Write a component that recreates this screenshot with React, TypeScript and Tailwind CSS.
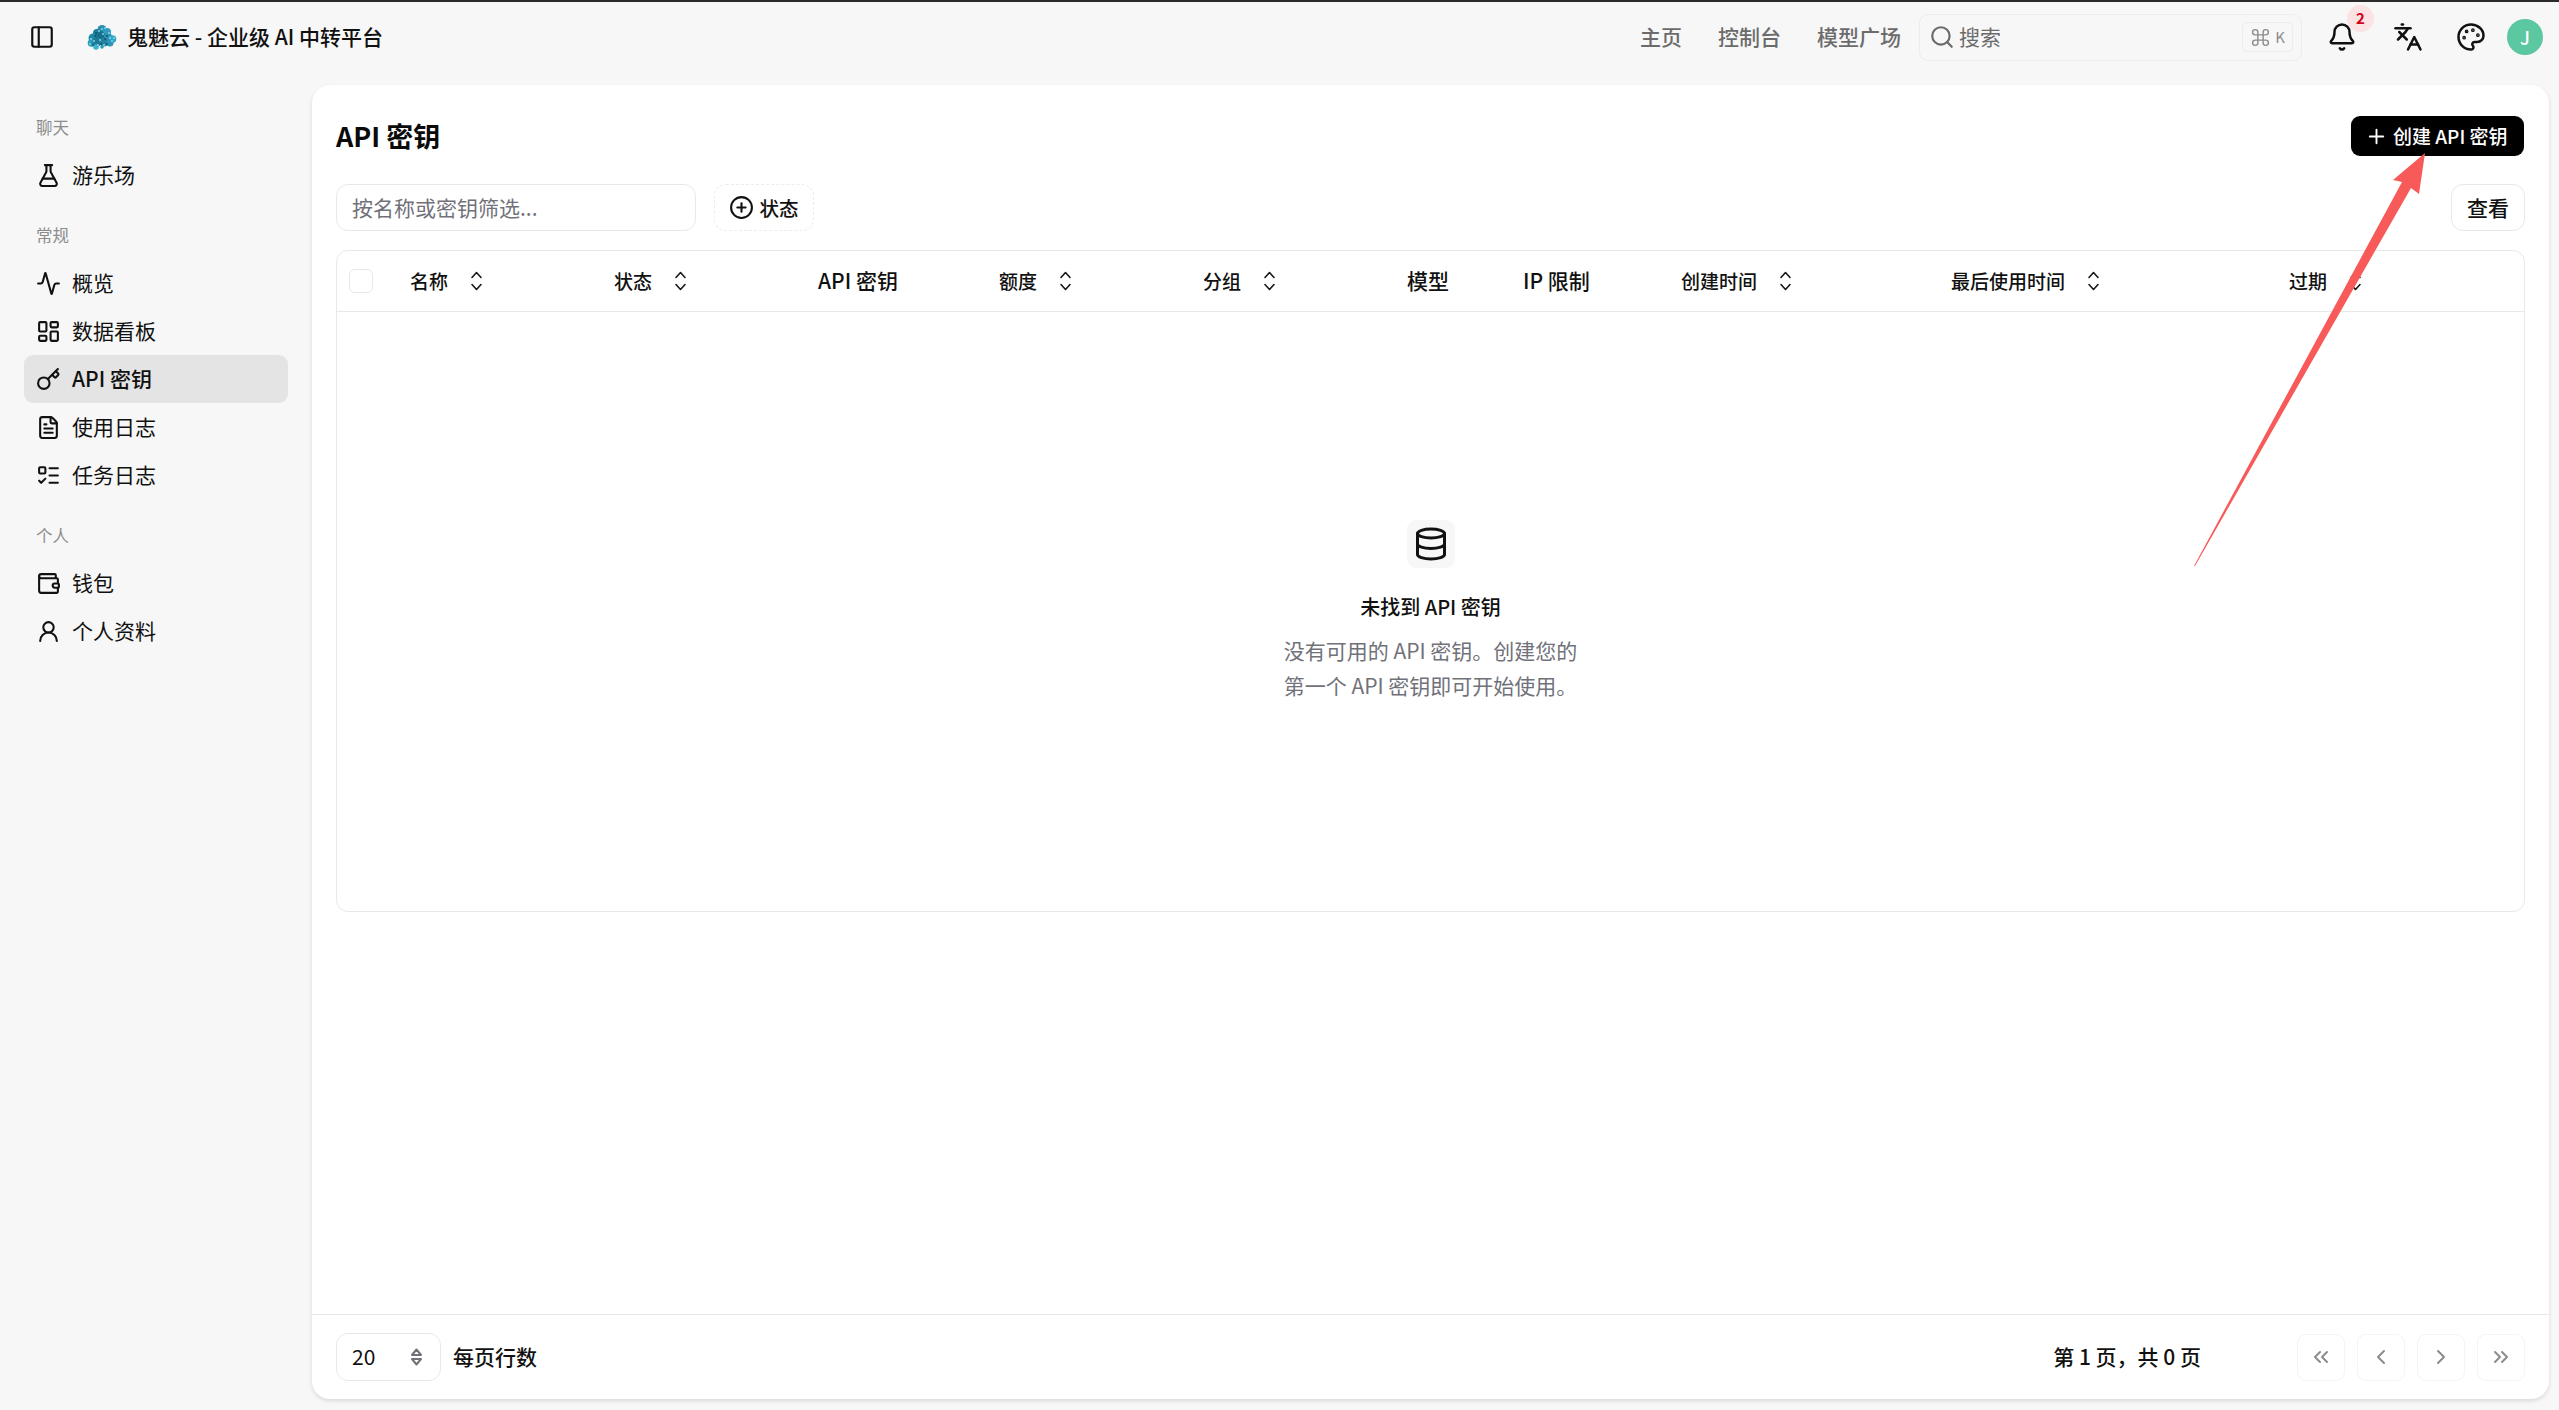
import React from "react";
import {
  PanelLeft, FlaskConical, Activity, LayoutDashboard, Key, FileText, ListTodo, Wallet, UserRound,
  Search, Command, Bell, Languages, Palette, Plus, CirclePlus, ChevronsLeft, ChevronLeft, ChevronRight, ChevronsRight, Database,
} from "lucide-react";

const font = "font-['Noto_Sans_CJK_SC','Noto_Sans',sans-serif]";

function Logo() {
  const pts: [number, number, number, string][] = [
    [15, 5.5, 4.5, "#2a8fb0"], [10, 9, 4, "#1d7f9c"], [20, 8, 4, "#2d9cc0"], [6, 14, 4.5, "#1f8aa5"], [13, 12, 5, "#17708c"],
    [21, 13, 4, "#2a94b5"], [25.5, 15, 3.8, "#2fa6c6"], [4.5, 19, 3.8, "#2a9cb4"], [10, 18, 4.5, "#1b7a98"], [17, 18, 4.5, "#23809f"],
    [23, 19, 3.5, "#2a96b8"], [9, 23, 2.8, "#3ab3d0"], [15, 23, 1.8, "#2a9cc0"],
  ];
  const dots = [[8, 12], [12, 7], [16, 10], [20, 12], [7, 17], [13, 16], [18, 15], [23, 14], [11, 21], [20, 20], [15, 5], [4, 15], [9, 9], [18, 4], [25, 17], [14, 20], [3, 20], [22, 9], [6, 21], [17, 21], [27, 14]];
  return (
    <svg width="30" height="27" viewBox="0 0 30 27" className="shrink-0">
      {pts.map(([x, y, r, c], i) => <circle key={i} cx={x} cy={y} r={r} fill={c} />)}
      {dots.map(([x, y], i) => (
        <circle key={i} cx={x} cy={y} r="0.9" fill={i % 3 === 0 ? "#0f4f6b" : "#8fdcec"} />
      ))}
    </svg>
  );
}

function SortIcon() {
  return (
    <svg width="15" height="24" viewBox="0 0 15 24" fill="none" stroke="#18181b" strokeWidth="1.6" strokeLinecap="round" strokeLinejoin="round" className="shrink-0">
      <path d="M3 8.5 7.5 3.5l4.5 5" />
      <path d="M3 15.5l4.5 5 4.5-5" />
    </svg>
  );
}

function NavItem({ icon: Icon, label, active }: { icon: React.ComponentType<any>; label: string; active?: boolean }) {
  return (
    <div className={`flex h-[48px] items-center gap-[11px] rounded-[9px] pl-[12px] text-[21px] text-[#111] ${active ? "bg-[#e4e4e4] font-medium" : ""}`}>
      <Icon size={25} strokeWidth={2} className="shrink-0 text-[#111]" />
      <span>{label}</span>
    </div>
  );
}

function SectionLabel({ children }: { children: React.ReactNode }) {
  return <div className="flex h-[48px] items-center px-[12px] text-[16.5px] text-[#8c8c8c]">{children}</div>;
}

function Sidebar() {
  return (
    <aside className="flex w-[312px] shrink-0 flex-col pl-[24px] pr-[24px] pt-[18px]">
      <SectionLabel>聊天</SectionLabel>
      <NavItem icon={FlaskConical} label="游乐场" />
      <div className="h-[12px]" />
      <SectionLabel>常规</SectionLabel>
      <NavItem icon={Activity} label="概览" />
      <NavItem icon={LayoutDashboard} label="数据看板" />
      <NavItem icon={Key} label="API 密钥" active />
      <NavItem icon={FileText} label="使用日志" />
      <NavItem icon={ListTodo} label="任务日志" />
      <div className="h-[12px]" />
      <SectionLabel>个人</SectionLabel>
      <NavItem icon={Wallet} label="钱包" />
      <NavItem icon={UserRound} label="个人资料" />
    </aside>
  );
}

function Topbar() {
  return (
    <header className="flex h-[70px] shrink-0 items-center pl-[29px] pr-[16px]">
      <PanelLeft size={26} strokeWidth={2} className="text-[#111]" />
      <div className="ml-[32px] flex items-center gap-[10px]">
        <Logo />
        <span className="text-[21px] font-medium text-[#111]">鬼魅云 - 企业级 AI 中转平台</span>
      </div>
      <nav className="ml-auto flex items-center gap-[36px] text-[21px] font-medium text-[#6b6b6b]">
        <span>主页</span>
        <span>控制台</span>
        <span>模型广场</span>
      </nav>
      <div className="ml-[18px] flex h-[47px] w-[383px] items-center rounded-[9px] border border-[#ececec] bg-[#f7f7f7] pl-[9px] pr-[8px] text-[21px] text-[#6b6b6b]">
        <Search size={26} strokeWidth={2} className="mr-[4px]" />
        <span>搜索</span>
        <div className="ml-auto flex h-[30px] w-[51px] items-center justify-center gap-[4px] rounded-[5px] border border-[#ececec] text-[15px] text-[#8c8c8c]">
          <Command size={21} strokeWidth={1.6} />
          <span>K</span>
        </div>
      </div>
      <div className="relative ml-[25px] flex h-[48px] w-[30px] items-center justify-center">
        <Bell size={30} strokeWidth={2} className="text-[#111]" />
        <span className="absolute right-[-17px] top-[-8px] flex h-[27px] w-[27px] items-center justify-center rounded-full bg-[#fbe3e4] text-[15px] font-bold text-[#d0021b]">2</span>
      </div>
      <Languages size={30} strokeWidth={2} className="ml-[36px] text-[#111]" />
      <Palette size={30} strokeWidth={2} className="ml-[33px] text-[#111]" />
      <div className="ml-[21px] flex h-[36px] w-[36px] items-center justify-center rounded-full bg-[#5cc8a2] text-[18px] font-medium text-white">J</div>
    </header>
  );
}

const cols = [
  { label: "名称", sort: true },
  { label: "状态", sort: true },
  { label: "API 密钥" },
  { label: "额度", sort: true },
  { label: "分组", sort: true },
  { label: "模型" },
  { label: "IP 限制" },
  { label: "创建时间", sort: true },
  { label: "最后使用时间", sort: true },
  { label: "过期", sort: true },
];

function DataTable() {
  return (
    <div className="mt-[19px] flex h-[662px] flex-col rounded-[12px] border border-[#e8e8e8]">
      <div className="grid h-[61px] shrink-0 grid-cols-[73px_204px_204px_181px_204px_204px_116px_158px_270px_338px_1fr] items-center border-b border-[#e8e8e8]">
        <div className="pl-[12px]">
          <div className="h-[24px] w-[24px] rounded-[6px] border border-[#e8e8e8]" />
        </div>
        {cols.map((c) =>
          c.sort ? (
            <div key={c.label} className="flex items-center gap-[21px] text-[19px] font-medium text-[#111]">
              <span>{c.label}</span>
              <SortIcon />
            </div>
          ) : (
            <div key={c.label} className="text-[21px] font-medium text-[#111]">{c.label}</div>
          ),
        )}
      </div>
      <div className="flex flex-1 flex-col items-center pt-[208px]">
        <div className="flex h-[48px] w-[48px] items-center justify-center rounded-[9px] bg-[#f7f7f7]">
          <Database size={36} strokeWidth={2} className="text-[#111]" />
        </div>
        <div className="mt-[23px] text-[20px] font-medium leading-[32px] text-[#111]">未找到 API 密钥</div>
        <div className="mt-[10px] text-left text-[21px] leading-[35px] text-[#71717a]">
          <div>没有可用的 API 密钥。创建您的</div>
          <div>第一个 API 密钥即可开始使用。</div>
        </div>
      </div>
    </div>
  );
}

function PageButton({ icon: Icon }: { icon: React.ComponentType<any> }) {
  return (
    <div className="flex h-[47px] w-[48px] items-center justify-center rounded-[9px] border border-[#f4f4f4]">
      <Icon size={24} strokeWidth={2} className="text-[#8c8c8c]" />
    </div>
  );
}

function Footer() {
  return (
    <div className="flex h-[85px] shrink-0 items-center border-t border-[#e8e8e8] pl-[24px] pr-[24px]">
      <div className="flex h-[48px] w-[105px] items-center rounded-[12px] border border-[#e8e8e8] pl-[15px] pr-[16px] text-[21px] text-[#111]">
        <span>20</span>
        <svg width="15" height="20" viewBox="0 0 15 20" fill="none" stroke="#71717a" strokeWidth="2" strokeLinejoin="round" className="ml-auto">
          <path d="M3 8 7.5 2.5 12 8Z" />
          <path d="M3 12l4.5 5.5L12 12Z" />
        </svg>
      </div>
      <span className="ml-[12px] text-[21px] font-medium text-[#111]">每页行数</span>
      <span className="ml-auto text-[21px] font-medium text-[#111]">第 1 页，共 0 页</span>
      <div className="ml-[96px] flex items-center gap-[12px]">
        <PageButton icon={ChevronsLeft} />
        <PageButton icon={ChevronLeft} />
        <PageButton icon={ChevronRight} />
        <PageButton icon={ChevronsRight} />
      </div>
    </div>
  );
}

function Content() {
  return (
    <main className="mb-[11px] mr-[10px] flex min-w-0 flex-1 flex-col overflow-hidden rounded-[18px] bg-white shadow-[0_2px_4px_rgba(0,0,0,0.12)]">
      <div className="flex-1 px-[24px] pt-[31px]">
        <div className="flex h-[40px] items-center justify-between">
          <h1 className="text-[27px] font-semibold text-[#0a0a0a]">API 密钥</h1>
          <button className="mr-[1px] flex h-[40px] w-[173px] items-center gap-[5px] rounded-[9px] bg-black pl-[14px] text-[19px] font-medium text-white">
            <Plus size={23} strokeWidth={2} />
            创建 API 密钥
          </button>
        </div>
        <div className="mt-[28px] flex h-[47px] items-center">
          <div className="flex h-full w-[360px] items-center rounded-[12px] border border-[#e8e8e8] pl-[15px] text-[21px] text-[#71717a]">按名称或密钥筛选...</div>
          <div className="ml-[18px] flex h-full w-[100px] items-center justify-center gap-[5px] rounded-[12px] border border-dashed border-[#ececec] text-[19.5px] font-medium text-[#111]">
            <CirclePlus size={25} strokeWidth={2} />
            状态
          </div>
          <div className="ml-auto flex h-full w-[74px] items-center justify-center rounded-[12px] border border-[#e8e8e8] text-[21px] font-medium text-[#111]">查看</div>
        </div>
        <DataTable />
      </div>
      <Footer />
    </main>
  );
}

export default function App() {
  return (
    <div className={`relative flex h-[1410px] w-[2559px] flex-col overflow-hidden bg-[#f7f7f7] ${font}`}>
      <div className="h-[2px] shrink-0 bg-[#2a2a2a]" />
      <Topbar />
      <div className="flex min-h-0 flex-1 pt-[13px]">
        <Sidebar />
        <Content />
      </div>
      <svg width="2559" height="1410" viewBox="0 0 2559 1410" className="pointer-events-none absolute left-0 top-0">
        <polygon points="2425,153 2419,194 2411,188 2195,566 2194,566 2402,182 2393,180" fill="#f85a5a" />
      </svg>
    </div>
  );
}
